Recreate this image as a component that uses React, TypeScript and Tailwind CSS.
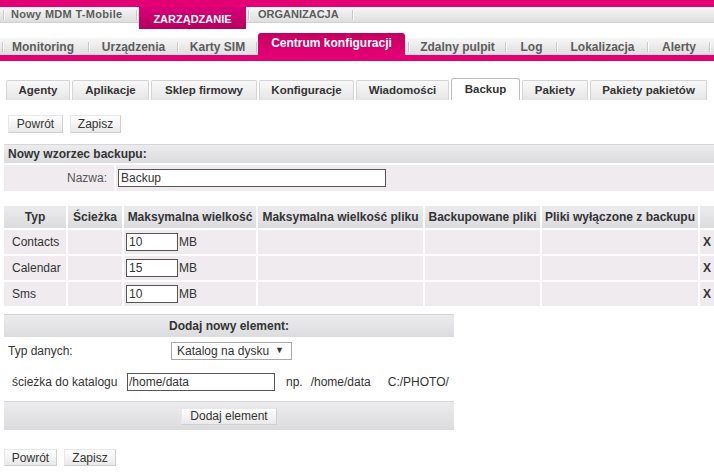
import React from 'react';

const font = "font-['Liberation_Sans',Arial,sans-serif]";

function Sep({ h = 'h-[10px]' }: { h?: string }) {
  return (
    <div className="flex h-full items-center">
      <div className={`w-px ${h} bg-[#c9c9c9]`} />
      <div className={`w-px ${h} bg-white`} />
    </div>
  );
}

function Btn({ label, w, h = 'h-[18px]' }: { label: string; w: string; h?: string }) {
  return (
    <div
      className={`${w} ${h} flex items-center justify-center border border-[#d0d0d0] border-t-[#e8e8e8] border-l-[#e8e8e8] bg-gradient-to-b from-white to-[#e9e9e9] text-[12px] text-[#333]`}
    >
      {label}
    </div>
  );
}

const subTabs = [
  { label: 'Agenty', w: 'w-[64px]' },
  { label: 'Aplikacje', w: 'w-[77px]' },
  { label: 'Sklep firmowy', w: 'w-[106px]' },
  { label: 'Konfiguracje', w: 'w-[95px]' },
  { label: 'Wiadomości', w: 'w-[93px]' },
  { label: 'Backup', w: 'w-[69px]', active: true },
  { label: 'Pakiety', w: 'w-[66px]' },
  { label: 'Pakiety pakietów', w: 'w-[117px]' },
];

const cols = [
  { label: 'Typ', w: 'w-[62px]' },
  { label: 'Ścieżka', w: 'w-[54px]' },
  { label: 'Maksymalna wielkość', w: 'w-[132px]' },
  { label: 'Maksymalna wielkość pliku', w: 'w-[165px]' },
  { label: 'Backupowane pliki', w: 'w-[115px]' },
  { label: 'Pliki wyłączone z backupu', w: 'w-[156px]' },
  { label: '', w: 'w-[14px]' },
];

const rows = [
  { typ: 'Contacts', size: '10' },
  { typ: 'Calendar', size: '15' },
  { typ: 'Sms', size: '10' },
];

const nav2 = [
  { label: 'Monitoring', w: 'w-[84px]', cls: 'pl-[8px] justify-start' },
  { label: 'Urządzenia', w: 'w-[87px]' },
  { label: 'Karty SIM', w: 'w-[77px]' },
];
const nav2b = [
  { label: 'Zdalny pulpit', w: 'w-[95px]' },
  { label: 'Log', w: 'w-[49px]' },
  { label: 'Lokalizacja', w: 'w-[89px]' },
  { label: 'Alerty', w: 'w-[60px]' },
];

export default function App() {
  return (
    <div className={`${font} relative h-[472px] w-[714px] overflow-hidden bg-white text-[#333]`}>
      {/* Top nav */}
      <div className="h-[7px] bg-[#e20074]" />
      <div className="flex h-[22px] items-start">
        <div className="flex h-[16px] items-center bg-gradient-to-b from-[#f7f7f7] to-[#dedede] border-b border-[#cfcfcf]">
          <div className="w-[3px]" />
          <Sep />
          <div className="w-[131px] pl-[6px] text-[11px] font-bold tracking-[0.3px] text-[#5c5c5c]">Nowy MDM T-Mobile</div>
          <Sep />
        </div>
        <div className="h-[16px] w-[1px] bg-gradient-to-b from-[#f7f7f7] to-[#dedede]" />
        <div className="flex h-[22px] w-[107px] items-center justify-center bg-gradient-to-b from-[#d9007a] to-[#b5005b] pt-[2px] text-[11px] font-bold text-white">
          ZARZĄDZANIE
        </div>
        <div className="flex h-[16px] flex-1 items-center bg-gradient-to-b from-[#f7f7f7] to-[#dedede] border-b border-[#cfcfcf]">
          <div className="w-[2px]" />
          <Sep />
          <div className="w-[102px] pl-[8px] text-[11px] font-bold text-[#5c5c5c]">ORGANIZACJA</div>
          <Sep />
        </div>
      </div>

      {/* Second nav */}
      <div className="mt-[4px] flex h-[22px] items-end">
        <div className="flex h-[17px] items-center bg-gradient-to-b from-[#f7f7f7] to-[#dedede]">
          <div className="w-[2px]" />
          <Sep />
          {nav2.map((n) => (
            <React.Fragment key={n.label}>
              <div className={`${n.w} flex ${n.cls ?? 'justify-center'} text-[12px] font-bold text-[#5c5c5c]`}>{n.label}</div>
              <Sep />
            </React.Fragment>
          ))}
        </div>
        <div className="flex h-[22px] w-[147px] items-center justify-center rounded-t-[3px] bg-gradient-to-b from-[#c4005f] to-[#e20074] pb-[2px] text-[12px] font-bold text-white">
          Centrum konfiguracji
        </div>
        <div className="flex h-[17px] flex-1 items-center bg-gradient-to-b from-[#f7f7f7] to-[#dedede]">
          <div className="w-[3px]" />
          <Sep />
          {nav2b.map((n) => (
            <React.Fragment key={n.label}>
              <div className={`${n.w} flex justify-center text-[12px] font-bold text-[#5c5c5c]`}>{n.label}</div>
              <Sep />
            </React.Fragment>
          ))}
        </div>
      </div>
      <div className="h-[6px] bg-[#e20074]" />

      {/* Sub tabs */}
      <div className="mt-[17px] flex h-[22px] items-end gap-[2px] pl-[6px]">
        {subTabs.map((t) =>
          t.active ? (
            <div
              key={t.label}
              className={`${t.w} flex h-[22px] items-center justify-center rounded-t-[3px] border border-b-0 border-[#bdbdbd] bg-white text-[11.5px] font-bold text-[#333]`}
            >
              {t.label}
            </div>
          ) : (
            <div
              key={t.label}
              className={`${t.w} flex h-[20px] items-center justify-center rounded-t-[2px] border border-b-0 border-[#d4d4d4] bg-gradient-to-b from-[#f9f9f9] to-[#e6e6e6] text-[11.5px] font-bold text-[#333]`}
            >
              {t.label}
            </div>
          )
        )}
      </div>

      {/* Buttons */}
      <div className="mt-[15px] flex gap-[7px] pl-[8px]">
        <Btn label="Powrót" w="w-[55px]" />
        <Btn label="Zapisz" w="w-[51px]" />
      </div>

      {/* Section header */}
      <div className="ml-[4px] mt-[11px] flex h-[19px] items-center border-t border-[#d6d6d6] bg-gradient-to-b from-[#ececef] to-[#dcdcdf] pl-[4px] text-[12px] font-bold text-[#333]">
        Nowy wzorzec backupu:
      </div>

      <div className="ml-[4px] mt-[2px] flex h-[26px] gap-[2px]">
        <div className="flex w-[110px] items-center justify-end bg-[#efebee] pr-[7px] text-[12px] text-[#555]">Nazwa:</div>
        <div className="flex flex-1 items-center bg-[#efebee] pl-[2px]">
          <div className="flex h-[18px] w-[268px] items-center border border-[#555] bg-white pl-[2px] text-[12px] text-[#333]">
            Backup
          </div>
        </div>
      </div>

      {/* Table */}
      <div className="ml-[4px] mt-[15px] flex flex-col gap-[2px]">
        <div className="flex h-[22px] gap-[2px]">
          {cols.map((c, i) => (
            <div
              key={i}
              className={`${c.w} flex items-center justify-center bg-gradient-to-b from-[#ececef] to-[#dcdcdf] text-[12px] font-bold text-[#333] whitespace-nowrap`}
            >
              {c.label}
            </div>
          ))}
        </div>
        {rows.map((r) => (
          <div key={r.typ} className="flex h-[24px] gap-[2px] text-[12px] text-[#333]">
            <div className="flex w-[62px] items-center bg-[#efebee] pl-[8px]">{r.typ}</div>
            <div className="w-[54px] bg-[#efebee]" />
            <div className="flex w-[132px] items-center bg-[#efebee] pl-[2px]">
              <div className="flex h-[18px] w-[52px] items-center border border-[#555] bg-white pl-[2px]">{r.size}</div>
              <span className="ml-px">MB</span>
            </div>
            <div className="w-[165px] bg-[#efebee]" />
            <div className="w-[115px] bg-[#efebee]" />
            <div className="w-[156px] bg-[#efebee]" />
            <div className="flex w-[14px] items-center bg-[#efebee] pl-[3px] font-bold">X</div>
          </div>
        ))}
      </div>

      {/* Add new element */}
      <div className="ml-[4px] mt-[8px] flex h-[23px] w-[450px] items-center justify-center border-t border-[#d6d6d6] bg-gradient-to-b from-[#ececef] to-[#dcdcdf] text-[12px] font-bold text-[#333]">
        Dodaj nowy element:
      </div>

      <div className="mt-[5px] flex h-[17px] items-center text-[12px] text-[#333]">
        <div className="w-[171px] pl-[8px]">Typ danych:</div>
        <div className="flex h-[18px] w-[121px] items-center border border-[#a8a8a8] bg-white pl-[5px] text-[#333]">
          Katalog na dysku
          <span className="ml-[6px] text-[9px]">▼</span>
        </div>
      </div>

      <div className="mt-[14px] flex h-[18px] items-center text-[12px] text-[#333]">
        <div className="w-[127px] pl-[12px]">ścieżka do katalogu</div>
        <div className="flex h-[18px] w-[148px] items-center border border-[#555] bg-white pl-[1px]">/home/data</div>
        <div className="ml-[11px]">np.</div>
        <div className="ml-[8px]">/home/data</div>
        <div className="ml-[17px]">C:/PHOTO/</div>
      </div>

      <div className="ml-[4px] mt-[10px] flex h-[29px] w-[450px] items-center justify-center border-t border-[#d6d6d6] bg-gradient-to-b from-[#ececef] to-[#dcdcdf]">
        <Btn label="Dodaj element" w="w-[96px]" h="h-[17px]" />
      </div>

      <div className="mt-[19px] flex gap-[7px] pl-[4px]">
        <Btn label="Powrót" w="w-[53px]" h="h-[17px]" />
        <Btn label="Zapisz" w="w-[52px]" h="h-[17px]" />
      </div>
    </div>
  );
}
